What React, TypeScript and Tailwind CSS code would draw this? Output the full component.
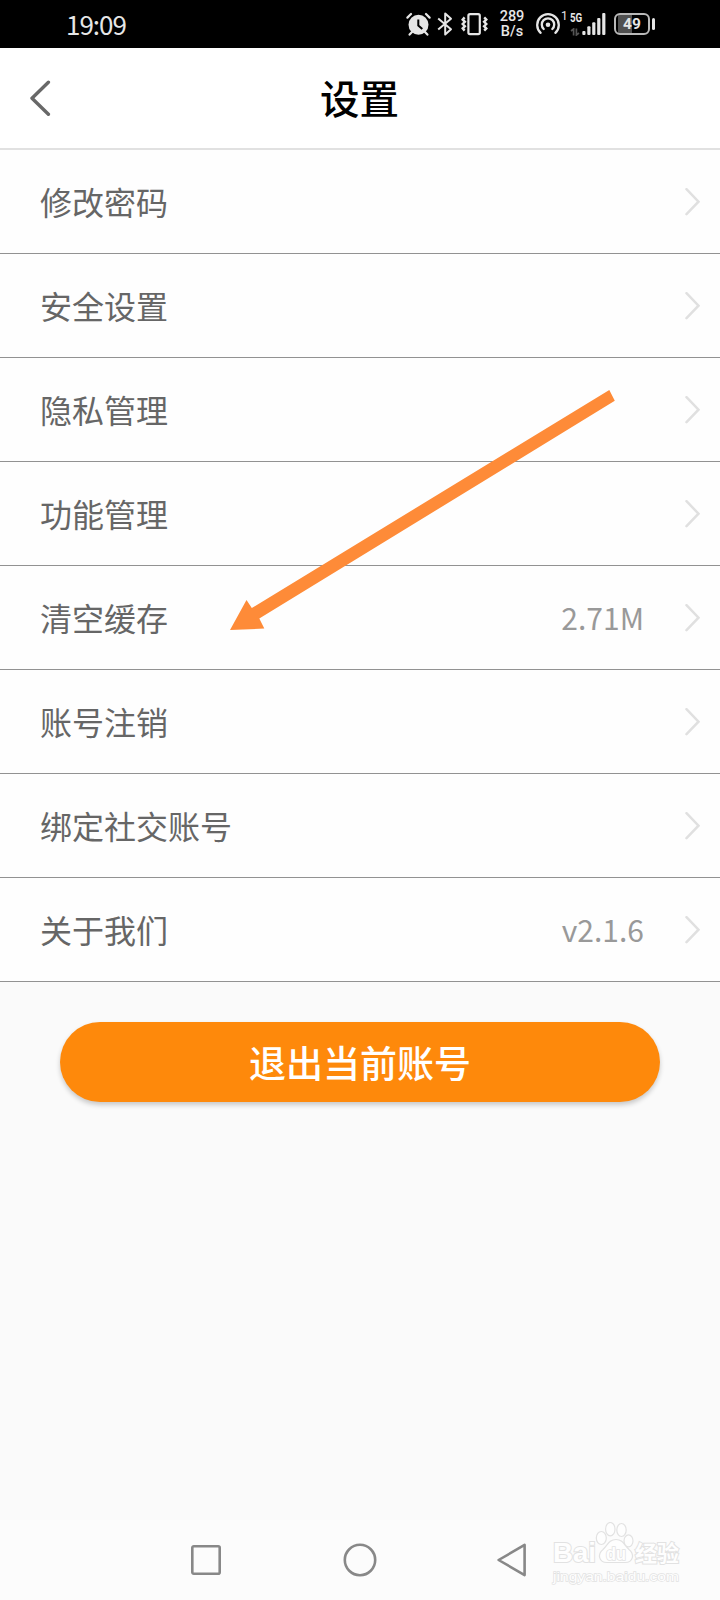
import React from "react";

interface SettingItem {
  id: string;
  label: string;
  value?: string;
}

const SETTINGS: SettingItem[] = [
  { id: "password", label: "修改密码" },
  { id: "security", label: "安全设置" },
  { id: "privacy", label: "隐私管理" },
  { id: "features", label: "功能管理" },
  { id: "cache", label: "清空缓存", value: "2.71M" },
  { id: "deactivate", label: "账号注销" },
  { id: "social", label: "绑定社交账号" },
  { id: "about", label: "关于我们", value: "v2.1.6" },
];

function StatusBar() {
  return (
    <header className="flex h-12 shrink-0 items-center bg-black pl-[66px] text-[#e6e6e6]">
      <span className="w-[340px] pb-px text-[26px] leading-none tracking-[-1px]">19:09</span>

      {/* Alarm */}
      <svg className="h-6 w-[25px]" viewBox="0 0 25 24" fill="none">
        <circle cx="12.5" cy="12.8" r="10" fill="#e6e6e6" />
        <path d="M1.4 5.6 5 2M23.6 5.6 20 2M6 20l-2.4 2.6M19 20l2.4 2.6" stroke="#e6e6e6" strokeWidth="2.2" strokeLinecap="round" />
        <path d="M12.3 7.5v6l4 3.6" stroke="#000" strokeWidth="2" />
      </svg>

      {/* Bluetooth */}
      <svg className="ml-1.5 h-6 w-4" viewBox="0 0 16 24" fill="none" stroke="#e6e6e6" strokeWidth="2" strokeLinejoin="round">
        <path d="M1.2 6.5 14 17.2 8.2 22.5V1.5L14 6.8 1.2 17.5" />
      </svg>

      {/* Vibrate */}
      <svg className="ml-2 h-6 w-[27px]" viewBox="0 0 27 24" fill="none" stroke="#e6e6e6" strokeWidth="2.2">
        <rect x="7.4" y="2.2" width="11.4" height="20" rx="1.6" />
        <path d="M3.6 5.4 1.7 7.6 3.9 9.8 1.7 12l2.2 2.2-2.2 2.2 1.9 2.2M23.2 5.4l2.1 2.2-2.2 2.2 2.2 2.2-2.2 2.2 2.2 2.2-2.1 2.2" strokeWidth="2.4" />
      </svg>

      <div className="ml-3 flex w-6 flex-col items-center pt-px font-['Roboto','Noto_Sans_CJK_SC',sans-serif] text-[14.5px] font-medium leading-[14.5px]">
        <span>289</span>
        <span>B/s</span>
      </div>

      {/* Hotspot */}
      <svg className="ml-3 h-6 w-6" viewBox="0 0 24 24" fill="none" stroke="#e6e6e6" strokeWidth="2.3" strokeLinecap="round">
        <path d="M4.6 20.8a10.8 10.8 0 1 1 14.8 0" />
        <path d="M7.7 17a6.2 6.2 0 1 1 8.6 0" />
        <circle cx="12" cy="12.8" r="2.3" fill="#e6e6e6" stroke="none" />
      </svg>
      <span className="mb-4 ml-px w-[9px] font-['Roboto','Noto_Sans_CJK_SC',sans-serif] text-[12px] leading-none">1</span>

      <div className="flex h-6 w-3 flex-col items-start justify-between">
        <span className="origin-left scale-x-75 font-['Roboto','Noto_Sans_CJK_SC',sans-serif] text-[13px] font-bold leading-3">5G</span>
        <svg className="h-2 w-2.5" viewBox="0 0 10 8" fill="none" stroke="#555" strokeWidth="1.7">
          <path d="M1 3 3.6 1v6.5M9 5 6.4 7V.5" />
        </svg>
      </div>
      <svg className="h-6 w-6" viewBox="0 0 24 24" fill="#e6e6e6">
        <rect x="0.3" y="19" width="3.2" height="4" rx="1" />
        <rect x="5.3" y="14.3" width="3.2" height="8.7" rx="1" />
        <rect x="10.2" y="10.3" width="3.2" height="12.7" rx="1" />
        <rect x="15.2" y="6" width="3.2" height="17" rx="1" />
        <rect x="20.2" y="1" width="3.2" height="22" rx="1" />
      </svg>

      {/* Battery */}
      <div className="ml-2 flex items-center gap-0.5">
        <div className="flex h-[22px] w-9 items-center justify-center rounded-[6px] border-2 border-[#b8b8b8] bg-[linear-gradient(90deg,#000_2px,#505050_2px,#505050_16px,#000_16px)] pt-px font-['Roboto','Noto_Sans_CJK_SC',sans-serif] text-[15.5px] font-bold leading-none">
          49
        </div>
        <div className="h-3 w-[3px] rounded-full bg-[#e6e6e6]" />
      </div>
    </header>
  );
}

function TitleBar() {
  return (
    <div className="flex h-[102px] shrink-0 items-center border-b-2 border-[#e1e1e1] bg-white">
      <button className="flex w-20 pl-[29px]" aria-label="返回">
        <svg className="h-9 w-[22px]" viewBox="0 0 22 36" fill="none" stroke="#686868" strokeWidth="3.4" strokeLinecap="round" strokeLinejoin="round">
          <path d="M19.4 2.2 3 18.2l16.4 16" />
        </svg>
      </button>
      <h1 className="flex-1 pb-0.5 pr-[81px] text-center text-[39.5px] font-medium leading-none text-black">设置</h1>
    </div>
  );
}

function SettingRow({ label, value }: SettingItem) {
  return (
    <li className="flex h-[104px] items-center border-b border-[#929292] bg-[#fefefe] pl-10 pr-5">
      <span className="flex-1 pb-0.5 text-[32px] leading-none text-[#666]">{label}</span>
      {value && <span className="mr-10 pb-0.5 text-[30px] leading-none text-[#999]">{value}</span>}
      <svg className="h-7 w-4" viewBox="0 0 16 28" fill="none" stroke="#e0e0e0" strokeWidth="2.5" strokeLinecap="round">
        <path d="m2.5 1.2 12 12.5-12 12.5" />
      </svg>
    </li>
  );
}

function Watermark() {
  return (
    <svg
      className="absolute left-[550px] top-0.5 h-[66px] w-[134px] font-['Liberation_Sans','Noto_Sans_CJK_SC',sans-serif]"
      viewBox="0 0 134 66"
      fill="#fefefe"
      stroke="#e2e2e2"
      strokeWidth="1.2"
    >
      <g fontWeight="bold" strokeWidth="2" paintOrder="stroke">
        <text x="3" y="40" fontSize="28" textLength="43" lengthAdjust="spacingAndGlyphs">Bai</text>
        <text x="85" y="38.5" fontSize="22" textLength="44" className="font-['Noto_Sans_CJK_SC',sans-serif]">经验</text>
      </g>
      <path d="M66 17.5c7 0 8 5 13 10 6 5 4 13-4 13H57c-8 0-10-8-4-13 5-5 6-10 13-10Z" />
      <ellipse cx="51.3" cy="16" rx="5" ry="6.5" />
      <ellipse cx="60.3" cy="7.2" rx="4.7" ry="6.7" />
      <ellipse cx="71.5" cy="8" rx="4.7" ry="6.5" />
      <ellipse cx="78.5" cy="18.8" rx="4.5" ry="6" />
      <text x="56" y="37.5" fontSize="18" fontWeight="bold" textLength="20" lengthAdjust="spacingAndGlyphs" strokeWidth="1.6" paintOrder="stroke">du</text>
      <text x="3" y="58.5" fontSize="13.5" textLength="126" lengthAdjust="spacingAndGlyphs" strokeWidth="1.3" paintOrder="stroke">jingyan.baidu.com</text>
    </svg>
  );
}

function NavigationBar() {
  return (
    <nav className="relative flex h-20 shrink-0 items-center bg-[#fcfcfc] pl-[190px]">
      <svg className="h-8 w-8" viewBox="0 0 32 32" fill="none" stroke="#888" strokeWidth="2.6">
        <rect x="2.3" y="2.3" width="27.4" height="27.4" rx="1.5" />
      </svg>
      <svg className="ml-[121px] h-[34px] w-[34px]" viewBox="0 0 34 34" fill="none" stroke="#888" strokeWidth="2.6">
        <circle cx="17" cy="17" r="15.2" />
      </svg>
      <svg className="ml-[119px] h-[34px] w-8" viewBox="0 0 32 34" fill="none" stroke="#888" strokeWidth="2.6" strokeLinejoin="round">
        <path d="M28.6 1.9v30.2L2.6 17Z" />
      </svg>
      <Watermark />
    </nav>
  );
}

export default function App() {
  return (
    <div className="relative flex h-[1600px] w-[720px] flex-col overflow-hidden bg-[#fafafa] font-['Noto_Sans_CJK_SC',sans-serif]">
      <StatusBar />
      <TitleBar />

      <ul className="shrink-0">
        {SETTINGS.map((item) => (
          <SettingRow key={item.id} {...item} />
        ))}
      </ul>

      <main className="flex-1 px-[60px] pt-10">
        <button className="flex h-20 w-full items-center justify-center rounded-full bg-[#fe890b] text-[37px] font-medium leading-none text-white shadow-[0_3px_5px_rgba(0,0,0,0.2)]">
          退出当前账号
        </button>
      </main>

      <NavigationBar />

      {/* Pointer to the cache row */}
      <svg className="pointer-events-none absolute left-[220px] top-[380px] h-[260px] w-[400px]" viewBox="220 380 400 260">
        <path d="M230 630 246.5 600l5.3 8L609.3 390l5.5 10.7L259.3 618.6l5 10Z" fill="#fe8b38" />
      </svg>
    </div>
  );
}
